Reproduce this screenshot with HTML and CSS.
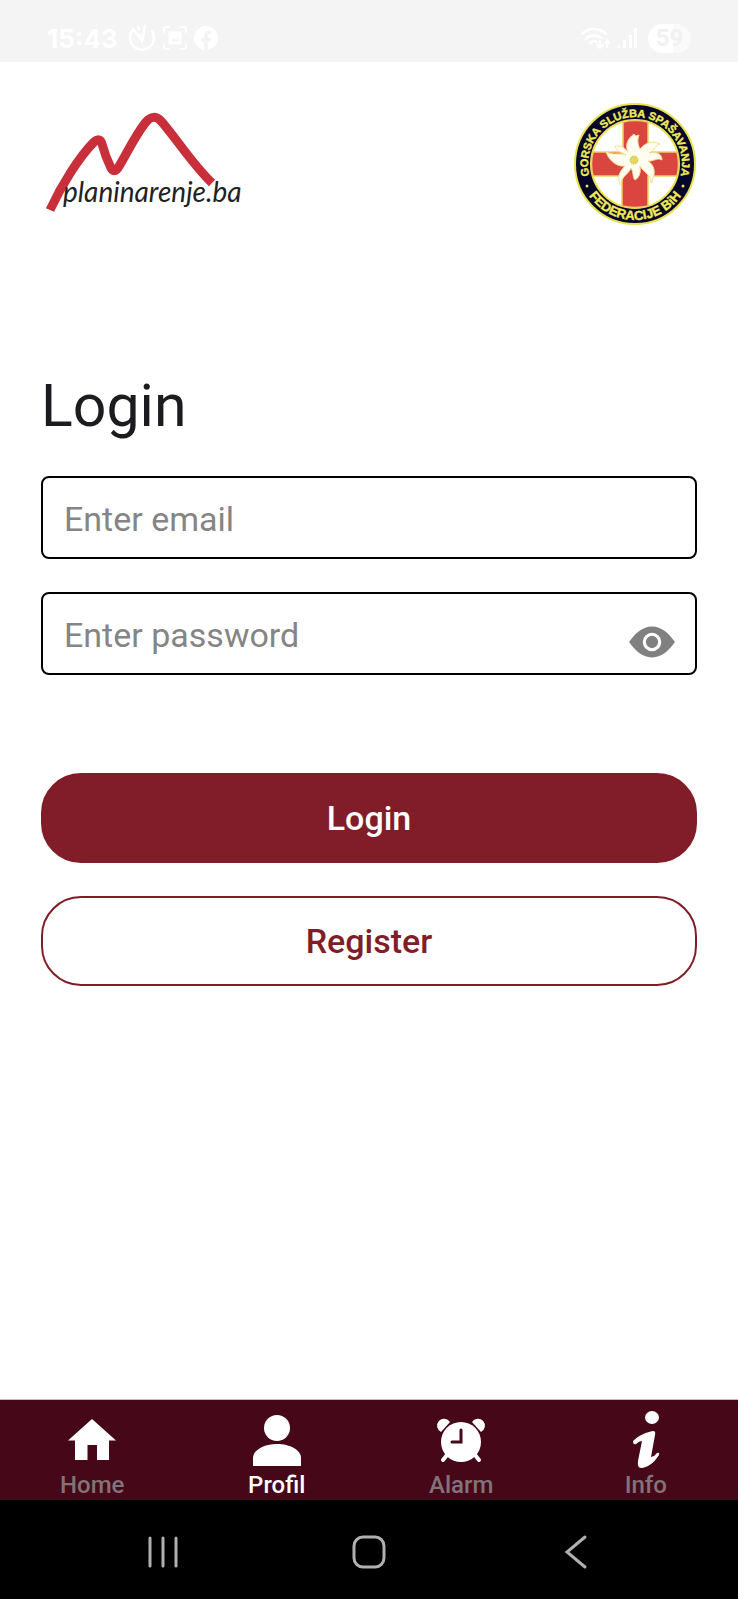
FILE: index.html
```html
<!DOCTYPE html>
<html lang="en">
<head>
  <meta charset="UTF-8" />
  <meta name="viewport" content="width=device-width, initial-scale=1.0"/>
  <title>Login - planinarenje.ba</title>
  <link rel="stylesheet" href="styles.css">
</head>
<body>

  <div class="status-bar">
    <div class="status-group">
      <span class="time">15:43</span>
      <svg width="28" height="28" viewBox="0 0 28 28" fill="none" stroke="#fff" stroke-width="2.5" stroke-linecap="round">
        <path d="M4 7a12 12 0 1 0 20 0M14 17L5 5M14 17l3-15M10 3l1 2"/>
        <path d="M14 17l-4-6 5 1z" fill="#fff"/>
      </svg>
      <svg width="26" height="26" viewBox="0 0 26 26" fill="none" stroke="#fff" stroke-width="2" stroke-linecap="round">
        <path d="M2 7V4q0-2 2-2h3M19 2h3q2 0 2 2v3M24 19v3q0 2-2 2h-3M7 24H4q-2 0-2-2v-3"/>
        <path d="M8 8h10v10H8z" stroke-width="3"/>
        <path d="M8 15l3-3 3 2 4-4v-2H8z" fill="#fff"/>
      </svg>
      <svg width="24" height="24" viewBox="0 0 24 24" fill="#fff">
        <path d="M24 12a12 12 0 1 0-13.900 11.900v-8.400H7V12h3.100V9.400C10.100 6.400 11.900 4.700 14.700 4.700c1.300 0 2.700.2 2.700.2v3h-1.500c-1.500 0-2 .9-2 1.900V12h3.400l-.5 3.500h-2.900v8.400A12 12 0 0 0 24 12z"/>
      </svg>
    </div>
    <div class="status-group">
      <svg width="32" height="26" viewBox="0 0 32 26" fill="none" stroke="#fff" stroke-width="2.500" stroke-linecap="round">
        <path d="M2 9a17 17 0 0 1 24 0M6 14a11 11 0 0 1 15-1M10 18a6 6 0 0 1 7-1"/>
        <path d="M20 16v7m-3-3l3 3 3-3M27 22v-7m-2 3l2-3 2 3" stroke-width="2"/>
      </svg>
      <svg width="20" height="24" viewBox="0 0 20 24" fill="#fff">
        <path d="M0 19h2v3H0zM5 14h3v8H5zM11 9h3v13h-3zM16 2h3v20h-3z"/>
      </svg>
      <span class="battery">59</span>
    </div>
  </div>

  <header class="header">
    <svg class="logo" viewBox="0 0 204 104" role="img" aria-label="planinarenje.ba">
      <path d="M9 98C20 74 38 45 53 30C57 26 60 28 61 32C64 43 67 50 70 56C72 60 75 59 77 56C85 43 95 22 105 10C110 4 115 4 120 9C135 26 152 53 171 71" fill="none" stroke="#c82f3a" stroke-width="9"/>
      <text class="logo-text" x="22" y="90">planinarenje.ba</text>
    </svg>
    <svg class="badge" viewBox="0 0 124 124" role="img" aria-label="Gorska služba spašavanja Federacije BiH">
      <defs>
        <path id="arc-top" d="M62 109a47 47 0 0 1 0-94a47 47 0 0 1 0 94"/>
        <path id="arc-bottom" d="M62 6a56 56 0 0 0 0 112a56 56 0 0 0 0-112"/>
      </defs>
      <circle cx="62" cy="62" r="60" fill="#06062a" stroke="#e9e24e" stroke-width="2"/>
      <circle cx="62" cy="62" r="44" fill="#fff" stroke="#e9e24e" stroke-width="2"/>
      <path d="M50 20q12-3 25 0v30h29q3 12 0 24H75v30q-13 3-26 0V74H20q-3-12 0-24h30z" fill="#da4540" stroke="#ebcf62" stroke-width="1.500"/>
      <path d="M55 50C52 44 54 37 61 32L63 34L66 33C64 38 65 43 67 47C72 41 79 38 87 42C82 43 82 48 76 51C84 49 89 52 89 58C84 55 80 60 75 59C81 63 84 70 78 81C78 72 70 70 67 64C68 71 66 76 62 78C59 75 61 70 58 66C56 72 48 74 48 83C43 76 47 69 52 64C46 65 37 61 33 50C42 54 47 50 53 53C47 50 43 48 42 44C48 43 52 46 55 50Z" fill="#fffdf0" stroke="#f0df91" stroke-width="1"/>
      <circle cx="61" cy="58" r="4" fill="#e5d85f" stroke="#c9ba45" stroke-dasharray="1 1"/>
      <text class="badge-text"><textPath href="#arc-top" startOffset="50%" text-anchor="middle">GORSKA SLUŽBA SPAŠAVANJA</textPath></text>
      <text class="badge-text badge-text-lg"><textPath href="#arc-bottom" startOffset="50%" text-anchor="middle">FEDERACIJE BiH</textPath></text>
      <circle cx="14" cy="84" r="1.500" fill="#e9e24e"/>
      <circle cx="110" cy="84" r="1.500" fill="#e9e24e"/>
    </svg>
  </header>

  <main class="content">
    <h1>Login</h1>
    <form id="login-form">
      <div class="form-group">
        <input type="email" id="email" placeholder="Enter email" aria-label="Enter email">
      </div>
      <div class="form-group">
        <input type="password" id="password" class="password" placeholder="Enter password" aria-label="Enter password">
        <button type="button" class="toggle" aria-label="Show password">
          <svg width="50" height="50" viewBox="0 0 24 24" fill="#808080">
            <path d="M1 12C3.500 8.500 7 4.600 12 4.600S20.500 8.500 23 12C20.500 15.500 17 19.400 12 19.400S3.500 15.500 1 12z"/>
            <circle cx="12" cy="12" r="3.700" stroke="#fff" stroke-width="1.500"/>
          </svg>
        </button>
      </div>
      <div class="actions">
        <button type="submit" class="btn btn-primary">Login</button>
        <button type="button" class="btn btn-outline">Register</button>
      </div>
    </form>
  </main>

  <nav class="tabs">
    <a href="#home" class="tab">
      <svg viewBox="0 0 60 60"><path d="M30 9L54 30.500H47V50H35V35H25.500V50H13V30.500H6z"/></svg>
      Home
    </a>
    <a href="#profil" class="tab active">
      <svg viewBox="0 0 60 60"><circle cx="30" cy="18" r="13"/><path d="M6 56v-8c0-8 11-14 24-14s24 6 24 14v8z"/></svg>
      Profil
    </a>
    <a href="#alarm" class="tab">
      <svg viewBox="0 0 60 60">
        <path d="M10 22a7 7 0 1 1 9-10zM50 22a7 7 0 1 0-9-10z"/>
        <path d="M16 45l-4 5M44 45l4 5" stroke="#fff" stroke-width="4" stroke-linecap="round"/>
        <circle cx="30" cy="32" r="20"/>
        <path class="hands" d="M30 20v12h-9"/>
      </svg>
      Alarm
    </a>
    <a href="#info" class="tab">
      <svg viewBox="0 0 60 60">
        <ellipse cx="36" cy="7.500" rx="7" ry="6.500"/>
        <path d="M17 31c6-6 14-9 20-10q3 0 2 4L35 47q4-1 6-4 3-1 2 2c-5 8-12 13-18 13q-4 0-3-7l4-20q-3 0-6 3-3 1-3-3z"/>
      </svg>
      Info
    </a>
  </nav>

  <div class="system-nav">
    <button type="button" aria-label="Recent apps"><svg width="36" height="36" viewBox="0 0 36 36"><path d="M5 4v28M18 4v28M31 4v28"/></svg></button>
    <button type="button" aria-label="Home screen"><svg width="36" height="36" viewBox="0 0 36 36"><rect x="3" y="3" width="30" height="30" rx="9"/></svg></button>
    <button type="button" aria-label="Back"><svg width="36" height="36" viewBox="0 0 36 36"><path d="M28 3L10 18l18 15"/></svg></button>
  </div>

</body>
</html>
```
FILE: styles.css
```css
:root {
  --primary: #811d28;
  --tabs: #460819;
  --muted: #858585;
  --gutter: 41px;
}
* {
  box-sizing: border-box;
}
body {
  font-family: Roboto, sans-serif;
  background-color: #fff;
  margin: 0;
  min-height: 100vh;
  display: flex;
  flex-direction: column;
}
button {
  font-family: inherit;
  cursor: pointer;
}
svg {
  display: block;
}
.status-bar {
  display: flex;
  justify-content: space-between;
  height: 62px;
  padding: 14px 47px 0;
  background: #f4f4f4;
  color: #fff;
}
.status-group {
  display: flex;
  align-items: center;
  gap: 6px;
}
.time {
  font-family: Inter, sans-serif;
  font-size: 26px;
  font-weight: 700;
  margin-right: 4px;
}
.battery {
  width: 43px;
  margin-left: 4px;
  border-radius: 15px;
  background: linear-gradient(to right, #fff 58%, #fafafa 58%);
  color: #f1f1f1;
  font-size: 24px;
  font-weight: 700;
  line-height: 29px;
  text-align: center;
}
.header {
  display: flex;
  justify-content: space-between;
  align-items: center;
  padding: 40px var(--gutter) 0;
}
.logo {
  width: 204px;
  height: 104px;
}
.logo-text {
  font-family: Lato, sans-serif;
  font-size: 28px;
  font-style: italic;
  fill: #222;
}
.badge {
  width: 124px;
  height: 124px;
}
.badge-text {
  font-family: "Liberation Sans", sans-serif;
  font-size: 11px;
  font-weight: 700;
  fill: #f1ea55;
  stroke: #f1ea55;
  stroke-width: 0.4;
}
.badge-text-lg {
  font-size: 13px;
}
.content {
  flex: 1;
  padding: 144px var(--gutter) 40px;
}
h1 {
  margin: 0 0 34px;
  color: #1c1b1f;
  font-size: 59px;
  font-weight: 400;
  line-height: 72px;
}
.form-group {
  position: relative;
  margin-bottom: 33px;
}
input {
  display: block;
  width: 100%;
  height: 83px;
  padding: 2px 21px 0;
  font-family: inherit;
  font-size: 34px;
  border: 2px solid #000;
  border-radius: 8px;
  background: #fff;
}
input::placeholder {
  color: var(--muted);
  opacity: 1;
}
.password {
  padding-right: 80px;
}
/* show/hide icon sits inside the password box */
.toggle {
  position: absolute;
  right: 20px;
  bottom: 8px;
  padding: 0;
  border: none;
  background: none;
}
.actions {
  display: flex;
  flex-direction: column;
  gap: 33px;
  padding-top: 65px;
}
.btn {
  height: 90px;
  border: 2px solid var(--primary);
  border-radius: 40px;
  font-size: 34px;
  font-weight: 500;
}
.btn-primary {
  background: var(--primary);
  color: #fff;
}
.btn-outline {
  background: #fff;
  color: var(--primary);
}
.tabs {
  display: grid;
  grid-template-columns: repeat(4, 1fr);
  padding-top: 10px;
  border-top: 1px solid #c8bcc0;
  background: var(--tabs);
}
.tab {
  display: flex;
  flex-direction: column;
  align-items: center;
  color: #807478;
  font-size: 24px;
  font-weight: 500;
  line-height: 30px;
  text-decoration: none;
}
.tab.active {
  color: #fff;
}
.tab svg {
  width: 60px;
  height: 60px;
  fill: #fff;
}
.tab .hands {
  fill: none;
  stroke: var(--tabs);
  stroke-width: 3;
  stroke-linecap: round;
}
.system-nav {
  display: grid;
  grid-template-columns: repeat(3, 1fr);
  height: 99px;
  padding: 4px 60px 0;
  background: #000;
}
.system-nav button {
  display: flex;
  align-items: center;
  justify-content: center;
  border: none;
  background: none;
}
.system-nav svg {
  fill: none;
  stroke: #b0b0b0;
  stroke-width: 3;
  stroke-linecap: round;
}
```
